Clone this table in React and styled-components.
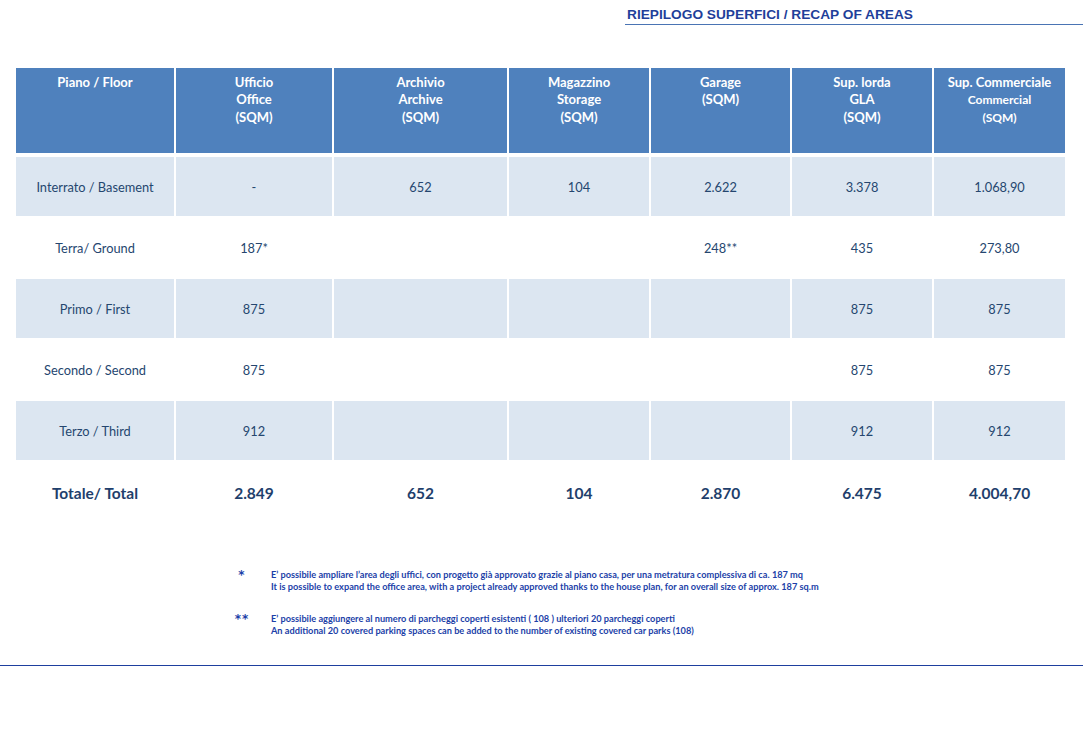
import React from "react";
import styled, { createGlobalStyle } from "styled-components";

const GlobalStyle = createGlobalStyle`
  html, body {
    margin: 0;
    padding: 0;
    background: #ffffff;
  }
  body {
    font-family: Lato, "Open Sans", sans-serif;
  }
`;

// column widths taken from the sheet
const columns = [158, 156, 173, 140, 139, 140, 131];

const headers = [
  [{ text: "Piano / Floor" }],
  [{ text: "Ufficio" }, { text: "Office" }, { text: "(SQM)" }],
  [{ text: "Archivio" }, { text: "Archive" }, { text: "(SQM)" }],
  [{ text: "Magazzino" }, { text: "Storage" }, { text: "(SQM)" }],
  [{ text: "Garage" }, { text: "(SQM)" }],
  [{ text: "Sup. lorda" }, { text: "GLA" }, { text: "(SQM)" }],
  [{ text: "Sup. Commerciale" }, { text: "Commercial", small: true }, { text: "(SQM)", small: true }],
];

const rows = [
  { shaded: true, cells: ["Interrato / Basement", "-", "652", "104", "2.622", "3.378", "1.068,90"] },
  { shaded: false, cells: ["Terra/ Ground", "187*", "", "", "248**", "435", "273,80"] },
  { shaded: true, cells: ["Primo / First", "875", "", "", "", "875", "875"] },
  { shaded: false, cells: ["Secondo / Second", "875", "", "", "", "875", "875"] },
  { shaded: true, cells: ["Terzo / Third", "912", "", "", "", "912", "912"] },
];

const totals = ["Totale/ Total", "2.849", "652", "104", "2.870", "6.475", "4.004,70"];

const notes = [
  {
    mark: "*",
    lines: [
      "E\u2019 possibile ampliare l\u2019area degli uffici, con progetto già approvato grazie al piano casa, per una metratura complessiva di ca. 187 mq",
      "It is possible to expand the office area, with a project already approved thanks to the house plan, for an overall size of approx. 187 sq.m",
    ],
  },
  {
    mark: "**",
    lines: [
      "E\u2019 possibile aggiungere al numero di parcheggi coperti esistenti ( 108 ) ulteriori 20 parcheggi coperti",
      "An additional 20 covered parking spaces can be added to the number of existing covered car parks (108)",
    ],
  },
];

const Page = styled.div`
  width: 1083px;
  height: 750px;
  overflow: hidden;
`;

const TitleBar = styled.div`
  display: flex;
  justify-content: flex-end;
  padding-top: 7px;
`;

const Title = styled.h1`
  width: 456px;
  margin: 0;
  padding: 0 0 1px 2px;
  border-bottom: 1px solid #4a74b4;
  font-family: "Liberation Sans", Arial, sans-serif;
  font-size: 13.7px;
  line-height: 16px;
  font-weight: 700;
  color: #1f3f9a;
`;

const Table = styled.table`
  margin: 41px 0 0 14px;
  border-collapse: separate;
  border-spacing: 2px;
  table-layout: fixed;
`;

const HeadCell = styled.th`
  height: 79px;
  padding: 6px 0 0;
  vertical-align: top;
  background: #4f81bd;
  border-bottom: 2px solid #ffffff;
  color: #ffffff;
  font-weight: 700;
  text-align: center;
`;

const HeadLine = styled.div`
  font-size: ${(p) => (p.$small ? "12px" : "13px")};
  line-height: 17.3px;
  white-space: nowrap;
`;

const Cell = styled.td`
  height: 59px;
  padding: 0;
  background: ${(p) => (p.$shaded ? "#dce6f1" : "#ffffff")};
  color: #25466f;
  font-size: 12.8px;
  text-align: center;
  vertical-align: middle;
  white-space: nowrap;
`;

const TotalCell = styled.td`
  height: 62px;
  padding: 0;
  color: #1f3f6c;
  font-size: 15.5px;
  font-weight: 700;
  text-align: center;
  vertical-align: middle;
  white-space: nowrap;
`;

const Notes = styled.div`
  display: flex;
  flex-direction: column;
  gap: 21px;
  margin-top: 43px;
  padding-left: 232px;
`;

const Note = styled.div`
  display: grid;
  grid-template-columns: 39px auto;
  color: #1c3fa8;
  font-weight: 700;
`;

const Mark = styled.span`
  font-family: "DejaVu Sans", sans-serif;
  font-size: 12px;
  line-height: 12px;
  text-align: center;
  width: 20px;
  letter-spacing: 1px;
`;

const NoteText = styled.div`
  font-size: 9.2px;
  line-height: 11.5px;
  white-space: nowrap;
`;

const BottomRule = styled.div`
  margin-top: 29px;
  height: 1px;
  background: #1e3f9e;
`;

export default function App() {
  return (
    <Page>
      <GlobalStyle />
      <TitleBar>
        <Title>RIEPILOGO SUPERFICI / RECAP OF AREAS</Title>
      </TitleBar>

      <Table>
        <colgroup>
          {columns.map((w, i) => (
            <col key={i} style={{ width: w }} />
          ))}
        </colgroup>
        <thead>
          <tr>
            {headers.map((lines, i) => (
              <HeadCell key={i}>
                {lines.map((l, j) => (
                  <HeadLine key={j} $small={l.small}>
                    {l.text}
                  </HeadLine>
                ))}
              </HeadCell>
            ))}
          </tr>
        </thead>
        <tbody>
          {rows.map((row, i) => (
            <tr key={i}>
              {row.cells.map((c, j) => (
                <Cell key={j} $shaded={row.shaded}>
                  {c}
                </Cell>
              ))}
            </tr>
          ))}
          <tr>
            {totals.map((t, i) => (
              <TotalCell key={i}>{t}</TotalCell>
            ))}
          </tr>
        </tbody>
      </Table>

      <Notes>
        {notes.map((n, i) => (
          <Note key={i}>
            <Mark>{n.mark}</Mark>
            <NoteText>
              {n.lines.map((l, j) => (
                <div key={j}>{l}</div>
              ))}
            </NoteText>
          </Note>
        ))}
      </Notes>

      <BottomRule />
    </Page>
  );
}
